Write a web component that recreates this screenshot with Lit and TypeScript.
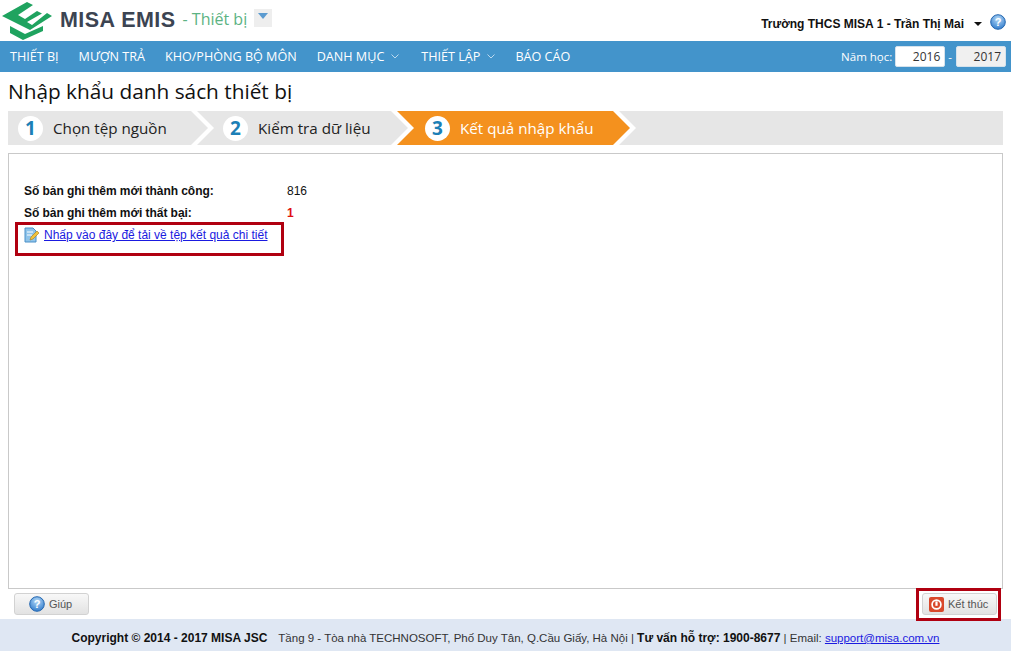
import { LitElement, html, css, svg } from "lit";
import { customElement } from "lit/decorators.js";

const helpIcon = (s: number) => html`<svg class="ic" width=${s} height=${s} viewBox="0 0 16 16">
  <defs><radialGradient id="hg" cx="50%" cy="30%" r="75%"><stop offset="0" stop-color="#b5daf8"/><stop offset="1" stop-color="#2a76c9"/></radialGradient></defs>
  <circle cx="8" cy="8" r="7.3" fill="url(#hg)" stroke="#2668b0" stroke-width="1"/>
  <text x="8" y="12" text-anchor="middle" font-family="Liberation Sans" font-weight="700" font-size="11" fill="#fff">?</text>
</svg>`;

const chevron = html`<svg class="chev" width="8" height="5" viewBox="0 0 8 5"><path d="M.5.5 4 4 7.5.5" fill="none" stroke="#bcd9ee" stroke-width="1"/></svg>`;

@customElement("app-root")
export class AppRoot extends LitElement {
  static styles = css`
    :host { display: block; position: relative; width: 1011px; height: 651px; overflow: hidden; background: #fff; font-family: "Open Sans", sans-serif; color: #111; }
    .page { display: flex; flex-direction: column; height: 651px; }
    .ic { display: block; flex: none; }
    .head { height: 41px; flex: none; display: flex; align-items: center; padding: 0 5px 0 0; }
    .logo { display: block; flex: none; }
    .brand { font: 700 21.5px "Liberation Sans", sans-serif; color: #3c4452; margin-left: 7px; letter-spacing: .45px; white-space: nowrap; }
    .mod { font-size: 16px; color: #5cb383; margin-left: 7px; white-space: nowrap; margin-top: -4px; }
    .tile { width: 18px; height: 18px; background: #eee; margin: -5px 0 0 7px; display: flex; justify-content: center; padding-top: 4px; box-sizing: border-box; }
    .tile i { display: block; width: 0; height: 0; border: 5px solid transparent; border-top: 6px solid #5b9bd0; border-bottom: 0; }
    .user { margin-left: auto; display: flex; align-items: center; font: 700 12px "Liberation Sans", sans-serif; padding-top: 6px; }
    .user .ic { margin-top: -3px; }
    .caret { width: 0; height: 0; border: 4px solid transparent; border-top: 4px solid #111; border-bottom: 0; margin: 0 8px 0 10px; }
    .nav { height: 31px; flex: none; background: #4394cb; display: flex; align-items: center; color: #fff; font-size: 12.6px; padding: 0 5px 0 10px; white-space: nowrap; }
    .item { display: flex; align-items: center; }
    .item + .item { margin-left: 20px; }
    .item:nth-child(4) { margin-right: 2px; }
    .chev { margin-left: 7px; }
    .year { margin-left: auto; display: flex; align-items: center; font-size: 11.5px; }
    .box { width: 50px; height: 21px; box-sizing: border-box; border: 1px solid #d5e2ec; border-radius: 2px; background: #fff; color: #333; text-align: right; padding-right: 4px; line-height: 19px; font-size: 12px; margin-left: 3px; }
    .box.off { background: #f0f0f0; margin-left: 4px; }
    .dash { margin-left: 3px; }
    h1 { margin: 0; height: 39px; flex: none; font-weight: 400; font-size: 20.8px; line-height: 39px; padding-left: 8px; color: #111; white-space: nowrap; }
    .steps { display: flex; height: 34px; flex: none; margin: 0 8px; }
    .step { height: 34px; display: flex; align-items: center; box-sizing: border-box; background: #e6e6e6; font-size: 15.2px; color: #222; margin-right: -11px; clip-path: polygon(0 0, calc(100% - 17px) 0, 100% 50%, calc(100% - 17px) 100%, 0 100%, 17px 50%); padding-left: 26px; flex: none; }
    .step.first { width: 200px; padding-left: 10px; clip-path: polygon(0 0, calc(100% - 17px) 0, 100% 50%, calc(100% - 17px) 100%, 0 100%); }
    .step.two { width: 211px; }
    .step.on { width: 233px; background: #f4911e; color: #fff; padding-left: 28px; }
    .step.rest { flex: 1; margin-right: 0; clip-path: polygon(0 0, 100% 0, 100% 100%, 0 100%, 17px 50%); }
    .num { width: 25px; height: 25px; border-radius: 50%; background: #fff; color: #1c7fb6; font-weight: 700; font-size: 19px; line-height: 25px; text-align: center; margin-right: 10px; flex: none; }
    .panel { flex: none; height: 436px; margin: 8px 8px 0; box-sizing: border-box; border: 1px solid #c9c9c9; padding: 26px 15px 0; font: 12px "Liberation Sans", sans-serif; }
    .row { display: flex; height: 22px; align-items: center; }
    .row b { width: 263px; flex: none; color: #111; letter-spacing: -.05px; }
    .row .fail { color: #e01010; }
    .dl { display: flex; align-items: center; height: 20px; margin-top: 1px; }
    .dl a { color: #1a1ae0; text-decoration: underline; margin-left: 5px; }
    .bar { height: 30px; flex: none; display: flex; align-items: center; justify-content: space-between; padding: 0 14px; box-sizing: border-box; }
    .btn { height: 22px; box-sizing: border-box; border: 1px solid #d2d2d2; border-radius: 3px; background: linear-gradient(#f8f8f8, #e2e2e2); display: flex; align-items: center; font: 11px "Liberation Sans", sans-serif; color: #555; gap: 4px; }
    .help { width: 75px; padding-left: 14px; }
    .end { width: 75px; padding-left: 6px; }
    .foot { flex: 1; background: #dfe7f3; display: flex; align-items: center; justify-content: center; font: 11.5px "Liberation Sans", sans-serif; color: #333; white-space: nowrap; padding: 6px 0 0 0; }
    .foot b { color: #111; font-size: 12px; }
    .foot a { color: #1a1ae0; text-decoration: underline; }
    .foot .gap { margin-left: 11px; }
    .mark { position: absolute; box-sizing: border-box; border: 3px solid #b00010; pointer-events: none; }
    .m1 { left: 15px; top: 222px; width: 269px; height: 34px; }
    .m2 { left: 916px; top: 588px; width: 85px; height: 33px; }
  `;

  render() {
    return html`
      <div class="page">
        <div class="head">
          <svg class="logo" width="53" height="40" viewBox="0 0 53 40">
            ${svg`<path d="M2 15 27 1l6 3-15 10 7 4 12-8 5 2.5-15 8.5 5 3 15-12 5 3-22 14z" fill="#1fa35f"/>
            <path d="M10 25v7l13 7 20-9v-5l-18 8z" fill="#1fa35f"/>`}
          </svg>
          <span class="brand">MISA EMIS</span>
          <span class="mod">- Thiết bị</span>
          <span class="tile"><i></i></span>
          <div class="user">Trường THCS MISA 1 - Trần Thị Mai<span class="caret"></span>${helpIcon(16)}</div>
        </div>
        <div class="nav">
          <span class="item">THIẾT BỊ</span>
          <span class="item">MƯỢN TRẢ</span>
          <span class="item">KHO/PHÒNG BỘ MÔN</span>
          <span class="item">DANH MỤC${chevron}</span>
          <span class="item">THIẾT LẬP${chevron}</span>
          <span class="item">BÁO CÁO</span>
          <span class="year">Năm học:<span class="box">2016</span><span class="dash">-</span><span class="box off">2017</span></span>
        </div>
        <h1>Nhập khẩu danh sách thiết bị</h1>
        <div class="steps">
          <div class="step first"><span class="num">1</span>Chọn tệp nguồn</div>
          <div class="step two"><span class="num">2</span>Kiểm tra dữ liệu</div>
          <div class="step on"><span class="num">3</span>Kết quả nhập khẩu</div>
          <div class="step rest"></div>
        </div>
        <div class="panel">
          <div class="row"><b>Số bản ghi thêm mới thành công:</b><span>816</span></div>
          <div class="row"><b>Số bản ghi thêm mới thất bại:</b><b class="fail">1</b></div>
          <div class="dl">
            <svg class="ic" width="15" height="16" viewBox="0 0 15 16">
              <path d="M1 1h8l3 3v11H1z" fill="#8fc4ea" stroke="#4a90c8"/>
              <path d="M3 5h6M3 8h5" stroke="#fff"/>
              <path d="M6 13l1-3 6-6 2 2-6 6z" fill="#f2c33d" stroke="#a87a14" stroke-width=".6"/>
            </svg>
            <a href="#">Nhấp vào đây để tải về tệp kết quả chi tiết</a>
          </div>
        </div>
        <div class="bar">
          <div class="btn help">${helpIcon(16)}Giúp</div>
          <div class="btn end">
            <svg class="ic" width="15" height="15" viewBox="0 0 15 15">
              <rect width="15" height="15" rx="2" fill="#d9482b"/>
              <circle cx="7.5" cy="7.5" r="4.4" fill="none" stroke="#fff" stroke-width="1.7"/>
              <rect x="6.4" y="4.4" width="2.2" height="4.4" fill="#fff"/>
            </svg>
            Kết thúc
          </div>
        </div>
        <div class="foot">
          <b>Copyright © 2014 - 2017 MISA JSC</b>
          <span class="gap">Tầng 9 - Tòa nhà TECHNOSOFT, Phố Duy Tân, Q.Cầu Giấy, Hà Nội | <b>Tư vấn hỗ trợ: 1900-8677</b> | Email: <a href="#">support@misa.com.vn</a></span>
        </div>
      </div>
      <div class="mark m1"></div>
      <div class="mark m2"></div>
    `;
  }
}
